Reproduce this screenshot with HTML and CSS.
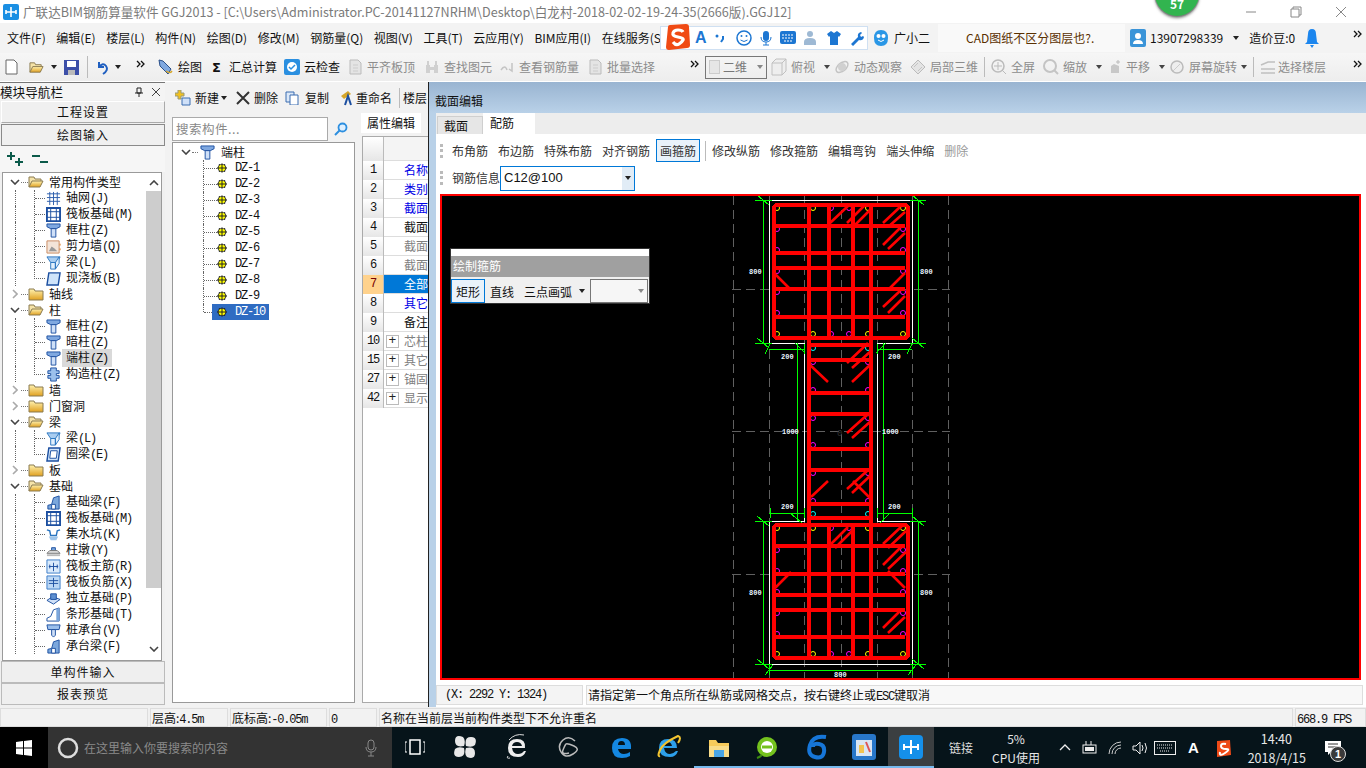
FILE: index.html
```html
<!DOCTYPE html>
<html lang="zh-CN">
<head>
<meta charset="utf-8">
<title>广联达BIM钢筋算量软件</title>
<link rel="stylesheet" href="styles.css">
</head>
<body>
<svg class="defs" width="0" height="0">
  <defs>
    <linearGradient id="gy" x1="0" y1="0" x2="0" y2="1"><stop offset="0" stop-color="#fff2b0"/><stop offset="1" stop-color="#e0a020"/></linearGradient>
    <symbol id="fc" viewBox="0 0 16 16"><path d="M1 3h5l1 2h8v9H1z" fill="url(#gy)" stroke="#8a7a50"/></symbol>
    <symbol id="fo" viewBox="0 0 16 16"><path d="M1 13V3h5l1 2h6v2" fill="#f5e3a8" stroke="#8a7a50"/><path d="M1 13l3-6h11l-3 6z" fill="url(#gy)" stroke="#8a7a50"/></symbol>
    <symbol id="col" viewBox="0 0 16 16"><path d="M1 1h14v3l-4 2H5L1 4z" fill="#7fa8e0" stroke="#1c4fa0"/><path d="M5.500 6h5v9h-5z" fill="#cfe0f8" stroke="#1c4fa0"/></symbol>
    <symbol id="grid" viewBox="0 0 16 16"><path d="M1 3h14M1 7h14M1 11h14M4 1v14M8 1v14M12 1v14" stroke="#2a5cab" fill="none"/></symbol>
    <symbol id="raft" viewBox="0 0 16 16"><path d="M1 1h14v14H1z" fill="#fff" stroke="#1c4fa0" stroke-width="2"/><path d="M5 1v14M11 1v14M1 5h14M1 11h14" stroke="#1c4fa0"/></symbol>
    <symbol id="wall" viewBox="0 0 16 16"><path d="M1 2h13v13H1z" fill="#f3e4d8" stroke="#c98a60"/><path d="M3 13l3-5 3 2 3 3z" fill="#999"/><path d="M15 5v2M15 10v2" stroke="#e07b20"/></symbol>
    <symbol id="beam" viewBox="0 0 16 16"><path d="M1 2h14l-3 6H5z" fill="#a9cdf0" stroke="#2a75c0"/><path d="M5 8h5v7H5zM10 8l4-6v7l-4 6z" fill="#e2f0fc" stroke="#2a75c0"/></symbol>
    <symbol id="slab" viewBox="0 0 16 16"><path d="M3 2h12l-2 13H1z" fill="#cfe4fa" stroke="#1c4fa0" stroke-width="1.500"/></symbol>
    <symbol id="ring" viewBox="0 0 16 16"><path d="M3 1h12l-2 14H1z" fill="#cfe4fa" stroke="#1c4fa0" stroke-width="1.500"/><path d="M5 4h7l-1 8H4z" fill="#fff" stroke="#1c4fa0"/></symbol>
    <symbol id="gz" viewBox="0 0 16 16"><path d="M5 1h6v3h3v3h-3v2h3v3h-3v3H5v-3H2V9h3V7H2V4h3z" fill="#9cc0ec" stroke="#1c4fa0"/></symbol>
    <symbol id="fb" viewBox="0 0 16 16"><path d="M2 15v-4l4-1 2-7 6-2v14z" fill="#7ba7dc" stroke="#1c4fa0"/><path d="M6 10h4v5H6z" fill="#fff" stroke="#1c4fa0"/></symbol>
    <symbol id="pit" viewBox="0 0 16 16"><path d="M1 3l3 1 1 5h6l1-5 3-1" fill="none" stroke="#2a75c0" stroke-width="1.500"/><path d="M3 10l2 4h6l2-4z" fill="#9cc4ea"/></symbol>
    <symbol id="pier" viewBox="0 0 16 16"><path d="M6 5h4v3H6z" fill="#7ba7dc" stroke="#1c4fa0"/><path d="M1 11l3-3h8l3 3z" fill="#d9d9d9" stroke="#777"/><path d="M1 12h14v2H1z" fill="#bbb"/></symbol>
    <symbol id="rm" viewBox="0 0 16 16"><path d="M1 1h14v14H1z" fill="#d9eafb" stroke="#3a7bc8"/><path d="M8 4v9M3 8h10M4 6v4M12 6v4" stroke="#1c4fa0" fill="none"/></symbol>
    <symbol id="rn" viewBox="0 0 16 16"><path d="M1 1h14v14H1z" fill="#bcd8f5" stroke="#3a7bc8"/><path d="M8 3v10M3 6h10M3 9h10" stroke="#1c4fa0" fill="none"/></symbol>
    <symbol id="iso" viewBox="0 0 16 16"><path d="M1 10l6-4 8 3-7 5z" fill="#cfe0f8" stroke="#1c4fa0"/><path d="M5 3h6v6H5z" fill="#5d8fd0" stroke="#1c4fa0"/></symbol>
    <symbol id="strip" viewBox="0 0 16 16"><path d="M1 15v-3l4-2 3-7 6-2v14z" fill="#fff" stroke="#1c4fa0"/><path d="M11 2l3-1v14h-3z" fill="#7ba7dc"/></symbol>
    <symbol id="cap" viewBox="0 0 16 16"><path d="M1 2h14l-1 5H2z" fill="#9cc0ec" stroke="#1c4fa0"/><path d="M6 7h4v6l-2 2-2-2z" fill="#cfe0f8" stroke="#1c4fa0"/></symbol>
    <symbol id="dz" viewBox="0 0 10 10"><path d="M5 0l1 1.500 2-.5.500 2L10 5 8.500 7 8 9l-2-.5L5 10 4 8.500 2 9l-.5-2L0 5l1.500-2L2 1l2 .5z" fill="#222"/><circle cx="5" cy="5" r="3.300" fill="#ff0"/><path d="M1.500 5h7M5 1.500v7" stroke="#222"/></symbol>
    <symbol id="chd" viewBox="0 0 10 6"><path d="M1 1l4 4 4-4" fill="none" stroke="#444" stroke-width="1.600"/></symbol>
    <symbol id="chr" viewBox="0 0 6 10"><path d="M1 1l4 4-4 4" fill="none" stroke="#aaa" stroke-width="1.600"/></symbol>
    <symbol id="dim" viewBox="0 0 16 16"><path d="M3 1h8l3 3v11H3z" fill="#e4e4e4" stroke="#bbb"/><path d="M6 6h5M6 9h5M6 12h5" stroke="#ccc"/></symbol>
    <symbol id="more" viewBox="0 0 9 8"><path d="M1 1l3 3-3 3M5 1l3 3-3 3" fill="none" stroke="#111" stroke-width="1.300"/></symbol>
  </defs>
</svg>

<header class="titlebar">
  <svg class="appicon" width="16" height="16" viewBox="0 0 16 16"><rect width="16" height="16" rx="2" fill="#1a8fe3"/><path d="M8 3v10M3 8h10M3 6v4M13 6v4" stroke="#fff" stroke-width="1.600" fill="none"/></svg>
  <span class="apptitle">广联达BIM钢筋算量软件 GGJ2013 - [C:\Users\Administrator.PC-20141127NRHM\Desktop\白龙村-2018-02-02-19-24-35(2666版).GGJ12]</span>
  <div class="winbtns">
    <svg width="12" height="12" viewBox="0 0 12 12"><path d="M1 6h10" stroke="#888"/></svg>
    <svg width="12" height="12" viewBox="0 0 12 12"><path d="M3 3V1h8v8H9M1 3h8v8H1z" stroke="#888" fill="none"/></svg>
    <svg width="12" height="12" viewBox="0 0 12 12"><path d="M1 1l10 10M11 1L1 11" stroke="#888"/></svg>
  </div>
  <div class="badge57">57</div>
</header>

<nav class="menubar">
  <div class="menus">
    <span>文件(F)</span><span>编辑(E)</span><span>楼层(L)</span><span>构件(N)</span><span>绘图(D)</span><span>修改(M)</span><span>钢筋量(Q)</span><span>视图(V)</span><span>工具(T)</span><span>云应用(Y)</span><span>BIM应用(I)</span><span>在线服务(S)</span>
  </div>
  <div class="imebar">
    <svg class="imelogo" width="28" height="26" viewBox="0 0 28 26"><path d="M5 3q0-2 2-2l16-1q3 0 3 3l1 18q0 3-3 3L6 26q-3 0-3-3z" fill="#f04a14"/><path d="M20 8q-1-2-5-2t-5 3 5 4 5 3-4 4-6-2" fill="none" stroke="#fff" stroke-width="3.200"/></svg>
    <span class="imeA">A</span>
    <svg class="ime-comma" width="12" height="16" viewBox="0 0 12 16"><circle cx="3" cy="6" r="1.500" fill="#1c76d2"/><path d="M9 6v3l-2 3" stroke="#1c76d2" stroke-width="2" fill="none"/></svg>
    <svg width="16" height="16" viewBox="0 0 16 16"><circle cx="8" cy="8" r="7" fill="none" stroke="#1c76d2" stroke-width="1.500"/><circle cx="5.500" cy="6" r="1" fill="#1c76d2"/><circle cx="10.500" cy="6" r="1" fill="#1c76d2"/><path d="M4.500 10q3.500 3 7 0" stroke="#1c76d2" fill="none"/></svg>
    <svg width="14" height="16" viewBox="0 0 14 16"><rect x="4" y="1" width="6" height="10" rx="3" fill="#1c76d2"/><path d="M2 7q0 5 5 5t5-5M7 12v3M4 15h6" stroke="#1c76d2" fill="none"/></svg>
    <svg width="16" height="14" viewBox="0 0 16 14"><rect width="16" height="13" rx="2" fill="#1c76d2"/><path d="M2 4h12M2 7h12M4 10h8" stroke="#fff" stroke-dasharray="2 1"/></svg>
    <svg width="16" height="16" viewBox="0 0 16 16"><circle cx="7" cy="4" r="3" fill="#9eb9d4"/><path d="M1 15v-3q0-4 6-4t6 4v3z" fill="#9eb9d4"/></svg>
    <svg width="16" height="16" viewBox="0 0 16 16"><path d="M5 1l3 2 3-2 4 3-2 3-1-1v9H4V6L3 7 1 4z" fill="#1c76d2"/></svg>
    <svg width="16" height="16" viewBox="0 0 16 16"><path d="M2 14l7-7q-1-4 3-5l1 1-2 2 1 2 2-1 1 1q-1 4-5 3l-6 6z" fill="#1c76d2"/></svg>
  </div>
  <svg class="mascot" width="16" height="18" viewBox="0 0 16 18"><path d="M8 1q7 0 7 8t-7 8-7-8 7-8z" fill="#2a97e6"/><circle cx="5.500" cy="7" r="2" fill="#fff"/><circle cx="10.500" cy="7" r="2" fill="#fff"/><path d="M5 11q3 3 6 0" stroke="#fff" fill="none"/></svg>
  <span class="xiaoer">广小二</span>
  <div class="newstab">CAD图纸不区分图层也?.</div>
  <div class="userbox">
    <svg width="16" height="18" viewBox="0 0 16 18"><rect width="16" height="18" rx="2" fill="#3a94d8"/><circle cx="8" cy="7" r="3" fill="#fff"/><path d="M3 15q0-4 5-4t5 4z" fill="#fff"/></svg>
    <span>13907298339</span><i class="caret"></i><span class="bean">造价豆:0</span>
    <svg class="bell" width="14" height="20" viewBox="0 0 14 20"><path d="M7 1q4 0 4 5l1 8 2 2H0l2-2 1-8q0-5 4-5z" fill="#1c86ee"/><path d="M5 17h4l-2 3z" fill="#1c86ee"/></svg>
  </div>
  <svg class="more-end" width="9" height="8"><use href="#more"/></svg>
</nav>

<div class="toolbar">
  <div class="tb-left">
    <svg width="13" height="16" viewBox="0 0 13 16"><path d="M1 1h8l3 3v11H1z" fill="#fff" stroke="#666"/></svg>
    <svg class="ti-open" width="17" height="15" viewBox="0 0 16 16"><use href="#fo"/></svg><i class="caret"></i>
    <svg class="ti-save" width="15" height="15" viewBox="0 0 15 15"><path d="M0 0h15v15H0z" fill="#3c4fa8"/><path d="M3 1h9v6H3z" fill="#fff"/><path d="M4 10h7v5H4z" fill="#bbb"/></svg>
    <i class="vsep"></i>
    <svg width="13" height="15" viewBox="0 0 13 15"><path d="M3 2v5h5" fill="none" stroke="#1f5fc0" stroke-width="2"/><path d="M3 7q4-5 7-1t-3 8" fill="none" stroke="#1f5fc0" stroke-width="2"/></svg><i class="caret"></i>
  </div>
  <svg class="more-a" width="9" height="8"><use href="#more"/></svg>
  <div class="tb-main">
    <div class="tool t-draw"><svg width="16" height="16" viewBox="0 0 16 16"><path d="M2 1l4 1 8 8-3 5-8-8z" fill="#7fa8e0" stroke="#2a4f88"/><path d="M9 12q4 3 6 0" stroke="#d6a62a" stroke-width="1.500" fill="none"/></svg>绘图</div>
    <div class="tool t-sum"><b class="sigma">Σ</b>汇总计算</div>
    <div class="tool t-cloud"><svg width="16" height="16" viewBox="0 0 16 16"><rect width="16" height="16" rx="2" fill="#2a8fe0"/><circle cx="8" cy="8" r="5" fill="#fff"/><path d="M5 8l2 2 4-4" stroke="#2a8fe0" stroke-width="1.500" fill="none"/></svg>云检查</div>
    <div class="tool off t-flat"><svg width="16" height="16"><use href="#dim"/></svg>平齐板顶</div>
    <div class="tool off t-find"><svg width="16" height="16" viewBox="0 0 16 16"><path d="M2 6h4v8H2zM10 6h4v8h-4zM6 8h4v3H6zM3 2h2v4H3zM11 2h2v4h-2z" fill="#d0d0d0"/></svg>查找图元</div>
    <div class="tool off t-view"><svg width="16" height="16" viewBox="0 0 16 16"><path d="M2 11q4-6 6 0M13 4v8l-3-2" stroke="#c4c4c4" stroke-width="1.500" fill="none"/></svg>查看钢筋量</div>
    <div class="tool off t-batch"><svg width="16" height="16"><use href="#dim"/></svg>批量选择</div>
  </div>
  <svg class="more-b" width="9" height="8"><use href="#more"/></svg>
  <div class="dimbox"><i class="dimsq"></i><span>二维</span><i class="caret gray"></i></div>
  <div class="tb-view">
    <div class="tool off t-top"><svg width="16" height="18" viewBox="0 0 16 18"><path d="M1 5l4-4h10v12l-4 4H1zM1 5h10v12M11 5l4-4" fill="#eee" stroke="#c0c0c0"/></svg>俯视<i class="caret"></i></div>
    <div class="tool off t-orbit"><svg width="16" height="16" viewBox="0 0 16 16"><ellipse cx="8" cy="8" rx="7" ry="4" transform="rotate(-40 8 8)" fill="none" stroke="#c4c4c4" stroke-width="1.500"/><circle cx="8" cy="8" r="4" fill="#d0d0d0"/></svg>动态观察</div>
    <div class="tool off t-local"><svg width="16" height="16" viewBox="0 0 16 16"><path d="M8 1l7 7-7 7-7-7z" fill="#e4e4e4" stroke="#bbb"/><path d="M4 8l4-4M8 12l4-4" stroke="#c4c4c4"/></svg>局部三维</div>
    <i class="vsep sm"></i>
    <div class="tool off t-full"><svg width="16" height="16" viewBox="0 0 16 16"><circle cx="7" cy="7" r="6" fill="none" stroke="#bbb" stroke-width="1.500"/><path d="M7 3v8M3 7h8M11 11l4 4" stroke="#bbb"/></svg>全屏</div>
    <div class="tool off t-zoom"><svg width="16" height="16" viewBox="0 0 16 16"><circle cx="7" cy="7" r="6" fill="none" stroke="#c4c4c4" stroke-width="2"/><path d="M11 11l4 4" stroke="#c4c4c4" stroke-width="2"/></svg>缩放<i class="caret"></i></div>
    <div class="tool off t-pan"><svg width="14" height="16" viewBox="0 0 14 16"><path d="M3 14V7l3-2 5 2v7z" fill="#c8c8c8"/><path d="M10 1v4M8 3h4" stroke="#bbb"/></svg>平移<i class="caret"></i></div>
    <div class="tool off t-rot"><svg width="16" height="16" viewBox="0 0 16 16"><circle cx="8" cy="8" r="6" fill="#eee" stroke="#bbb" stroke-width="1.500"/><path d="M4 12l7-7" stroke="#ccc"/></svg>屏幕旋转<i class="caret"></i></div>
    <i class="vsep sm"></i>
    <div class="tool off t-floor"><svg width="16" height="15" viewBox="0 0 16 15"><path d="M1 5l7-3h7M1 9h14M1 13h14" stroke="#c0c0c0" stroke-width="1.500" fill="none"/></svg>选择楼层</div>
  </div>
  <svg class="more-end" width="9" height="8"><use href="#more"/></svg>
</div>

<main class="workspace">
  <aside class="nav">
    <div class="navhead"><span>模块导航栏</span>
      <svg width="8" height="10" viewBox="0 0 8 10"><path d="M2 1h4v5H2zM0 6h8M4 6v4" fill="none" stroke="#222"/></svg>
      <svg width="8" height="8" viewBox="0 0 8 8"><path d="M0 0l8 8M8 0L0 8" stroke="#444"/></svg>
    </div>
    <button class="navbtn">工程设置</button>
    <button class="navbtn dark">绘图输入</button>
    <div class="expandbar">
      <svg width="18" height="16" viewBox="0 0 18 16"><path d="M1 5h8M5 1v8M9 11h8M13 7v8" stroke="#0b5a4a" stroke-width="2"/></svg>
      <svg width="18" height="16" viewBox="0 0 18 16"><path d="M1 5h8M9 11h8" stroke="#0b5a4a" stroke-width="2"/></svg>
    </div>
    <div class="treebox">
      <div class="tree">
        <div class="row r0"><svg class="chev" width="10" height="6"><use href="#chd"/></svg><i class="dots"></i><svg class="ic" width="16" height="16"><use href="#fo"/></svg><span class="lb">常用构件类型</span></div>
        <div class="row r1"><i class="ind"></i><i class="con"></i><svg class="ic" width="15" height="15"><use href="#grid"/></svg><span class="lb">轴网<em>(J)</em></span></div>
        <div class="row r1"><i class="ind"></i><i class="con"></i><svg class="ic" width="15" height="15"><use href="#raft"/></svg><span class="lb">筏板基础<em>(M)</em></span></div>
        <div class="row r1"><i class="ind"></i><i class="con"></i><svg class="ic" width="15" height="15"><use href="#col"/></svg><span class="lb">框柱<em>(Z)</em></span></div>
        <div class="row r1"><i class="ind"></i><i class="con"></i><svg class="ic" width="15" height="15"><use href="#wall"/></svg><span class="lb">剪力墙<em>(Q)</em></span></div>
        <div class="row r1"><i class="ind"></i><i class="con"></i><svg class="ic" width="15" height="15"><use href="#beam"/></svg><span class="lb">梁<em>(L)</em></span></div>
        <div class="row r1 end"><i class="ind none"></i><i class="con"></i><svg class="ic" width="15" height="15"><use href="#slab"/></svg><span class="lb">现浇板<em>(B)</em></span></div>
        <div class="row r0"><svg class="chev" width="10" height="10" viewBox="-2 0 10 10"><use href="#chr" width="6" height="10"/></svg><i class="dots"></i><svg class="ic" width="16" height="16"><use href="#fc"/></svg><span class="lb">轴线</span></div>
        <div class="row r0"><svg class="chev" width="10" height="6"><use href="#chd"/></svg><i class="dots"></i><svg class="ic" width="16" height="16"><use href="#fo"/></svg><span class="lb">柱</span></div>
        <div class="row r1"><i class="ind"></i><i class="con"></i><svg class="ic" width="15" height="15"><use href="#col"/></svg><span class="lb">框柱<em>(Z)</em></span></div>
        <div class="row r1"><i class="ind"></i><i class="con"></i><svg class="ic" width="15" height="15"><use href="#col"/></svg><span class="lb">暗柱<em>(Z)</em></span></div>
        <div class="row r1"><i class="ind"></i><i class="con"></i><svg class="ic" width="15" height="15"><use href="#col"/></svg><span class="lb hit">端柱<em>(Z)</em></span></div>
        <div class="row r1 end"><i class="ind none"></i><i class="con"></i><svg class="ic" width="15" height="15"><use href="#gz"/></svg><span class="lb">构造柱<em>(Z)</em></span></div>
        <div class="row r0"><svg class="chev" width="10" height="10" viewBox="-2 0 10 10"><use href="#chr" width="6" height="10"/></svg><i class="dots"></i><svg class="ic" width="16" height="16"><use href="#fc"/></svg><span class="lb">墙</span></div>
        <div class="row r0"><svg class="chev" width="10" height="10" viewBox="-2 0 10 10"><use href="#chr" width="6" height="10"/></svg><i class="dots"></i><svg class="ic" width="16" height="16"><use href="#fc"/></svg><span class="lb">门窗洞</span></div>
        <div class="row r0"><svg class="chev" width="10" height="6"><use href="#chd"/></svg><i class="dots"></i><svg class="ic" width="16" height="16"><use href="#fo"/></svg><span class="lb">梁</span></div>
        <div class="row r1"><i class="ind"></i><i class="con"></i><svg class="ic" width="15" height="15"><use href="#beam"/></svg><span class="lb">梁<em>(L)</em></span></div>
        <div class="row r1 end"><i class="ind none"></i><i class="con"></i><svg class="ic" width="15" height="15"><use href="#ring"/></svg><span class="lb">圈梁<em>(E)</em></span></div>
        <div class="row r0"><svg class="chev" width="10" height="10" viewBox="-2 0 10 10"><use href="#chr" width="6" height="10"/></svg><i class="dots"></i><svg class="ic" width="16" height="16"><use href="#fc"/></svg><span class="lb">板</span></div>
        <div class="row r0"><svg class="chev" width="10" height="6"><use href="#chd"/></svg><i class="dots"></i><svg class="ic" width="16" height="16"><use href="#fo"/></svg><span class="lb">基础</span></div>
        <div class="row r1"><i class="ind"></i><i class="con"></i><svg class="ic" width="15" height="15"><use href="#fb"/></svg><span class="lb">基础梁<em>(F)</em></span></div>
        <div class="row r1"><i class="ind"></i><i class="con"></i><svg class="ic" width="15" height="15"><use href="#raft"/></svg><span class="lb">筏板基础<em>(M)</em></span></div>
        <div class="row r1"><i class="ind"></i><i class="con"></i><svg class="ic" width="15" height="15"><use href="#pit"/></svg><span class="lb">集水坑<em>(K)</em></span></div>
        <div class="row r1"><i class="ind"></i><i class="con"></i><svg class="ic" width="15" height="15"><use href="#pier"/></svg><span class="lb">柱墩<em>(Y)</em></span></div>
        <div class="row r1"><i class="ind"></i><i class="con"></i><svg class="ic" width="15" height="15"><use href="#rm"/></svg><span class="lb">筏板主筋<em>(R)</em></span></div>
        <div class="row r1"><i class="ind"></i><i class="con"></i><svg class="ic" width="15" height="15"><use href="#rn"/></svg><span class="lb">筏板负筋<em>(X)</em></span></div>
        <div class="row r1"><i class="ind"></i><i class="con"></i><svg class="ic" width="15" height="15"><use href="#iso"/></svg><span class="lb">独立基础<em>(P)</em></span></div>
        <div class="row r1"><i class="ind"></i><i class="con"></i><svg class="ic" width="15" height="15"><use href="#strip"/></svg><span class="lb">条形基础<em>(T)</em></span></div>
        <div class="row r1"><i class="ind"></i><i class="con"></i><svg class="ic" width="15" height="15"><use href="#cap"/></svg><span class="lb">桩承台<em>(V)</em></span></div>
        <div class="row r1"><i class="ind"></i><i class="con"></i><svg class="ic" width="15" height="15"><use href="#fb"/></svg><span class="lb">承台梁<em>(F)</em></span></div>
      </div>
      <div class="scroll">
        <svg class="sc-up" width="10" height="6"><use href="#chd"/></svg>
        <div class="thumb"></div>
        <svg class="sc-dn" width="10" height="6"><use href="#chd"/></svg>
      </div>
    </div>
    <button class="navbtn flat">单构件输入</button>
    <button class="navbtn flat">报表预览</button>
  </aside>

  <div class="mid">
    <div class="comp-tools">
      <div class="ct c-new"><svg width="16" height="16" viewBox="0 0 16 16"><path d="M3 0h3v3h3v3H6v3H3V6H0V3h3z" fill="#f0c020" stroke="#997"/><path d="M7 8h8v7H7z" fill="#cfe0f8" stroke="#3a6cb0"/></svg>新建<i class="caret"></i></div>
      <div class="ct c-del"><svg width="14" height="14" viewBox="0 0 14 14"><path d="M1 1l12 12M13 1L1 13" stroke="#333" stroke-width="2"/></svg>删除</div>
      <div class="ct c-copy"><svg width="14" height="14" viewBox="0 0 14 14"><path d="M1 1h8v10H1z" fill="#dbe8f8" stroke="#3a6cb0"/><path d="M5 4h8v10H5z" fill="#fff" stroke="#3a6cb0"/></svg>复制</div>
      <div class="ct c-ren"><svg width="16" height="16" viewBox="0 0 16 16"><path d="M5 6l7-5 3 3-7 5z" fill="#d6a62a"/><path d="M9 15l3-9 3 9" fill="none" stroke="#1c4fa0" stroke-width="2"/></svg>重命名</div>
      <i class="vsep sm"></i>
      <div class="ct cut">楼层</div>
    </div>
    <div class="midrow">
      <section class="comp">
        <div class="searchline">
          <div class="searchbox">搜索构件...</div>
          <svg width="14" height="14" viewBox="0 0 14 14"><circle cx="8.500" cy="5.500" r="4" fill="#dff0ff" stroke="#2d8fe0" stroke-width="1.800"/><path d="M5.500 8.500L1 13" stroke="#2d8fe0" stroke-width="2"/></svg>
        </div>
        <div class="comptree">
          <div class="crow root"><svg width="10" height="6"><use href="#chd"/></svg><i class="dots"></i><svg class="cic" width="15" height="15"><use href="#col"/></svg><span>端柱</span></div>
          <div class="crow"><i class="ccon"></i><svg width="10" height="10"><use href="#dz"/></svg><em>DZ-1</em></div>
          <div class="crow"><i class="ccon"></i><svg width="10" height="10"><use href="#dz"/></svg><em>DZ-2</em></div>
          <div class="crow"><i class="ccon"></i><svg width="10" height="10"><use href="#dz"/></svg><em>DZ-3</em></div>
          <div class="crow"><i class="ccon"></i><svg width="10" height="10"><use href="#dz"/></svg><em>DZ-4</em></div>
          <div class="crow"><i class="ccon"></i><svg width="10" height="10"><use href="#dz"/></svg><em>DZ-5</em></div>
          <div class="crow"><i class="ccon"></i><svg width="10" height="10"><use href="#dz"/></svg><em>DZ-6</em></div>
          <div class="crow"><i class="ccon"></i><svg width="10" height="10"><use href="#dz"/></svg><em>DZ-7</em></div>
          <div class="crow"><i class="ccon"></i><svg width="10" height="10"><use href="#dz"/></svg><em>DZ-8</em></div>
          <div class="crow"><i class="ccon"></i><svg width="10" height="10"><use href="#dz"/></svg><em>DZ-9</em></div>
          <div class="crow sel"><i class="ccon last"></i><div class="selbg"><svg width="10" height="10"><use href="#dz"/></svg><em>DZ-10</em></div></div>
        </div>
      </section>

      <section class="props">
        <div class="ptabs"><span class="ptab">属性编辑</span></div>
        <div class="ptable">
          <div class="pr head"><b></b></div>
          <div class="pr"><b>1</b><span class="blue">名称</span></div>
          <div class="pr"><b>2</b><span class="blue">类别</span></div>
          <div class="pr"><b>3</b><span class="blue">截面</span></div>
          <div class="pr"><b>4</b><span>截面</span></div>
          <div class="pr"><b>5</b><span class="gray">截面</span></div>
          <div class="pr"><b>6</b><span class="gray">截面</span></div>
          <div class="pr on"><b>7</b><span>全部</span></div>
          <div class="pr"><b>8</b><span class="blue">其它</span></div>
          <div class="pr"><b>9</b><span>备注</span></div>
          <div class="pr gp"><b>10</b><i class="plus">+</i><span class="gray">芯柱</span></div>
          <div class="pr gp"><b>15</b><i class="plus">+</i><span class="gray">其它</span></div>
          <div class="pr gp"><b>27</b><i class="plus">+</i><span class="gray">锚固</span></div>
          <div class="pr gp"><b>42</b><i class="plus">+</i><span class="gray">显示</span></div>
        </div>
      </section>
    </div>
  </div>

  <section class="editor">
    <div class="edhead">截面编辑</div>
    <div class="edbody">
      <div class="tabs"><span class="tab">截面</span><span class="tab active">配筋</span></div>
      <div class="edtools">
        <i class="grip"></i>
        <span class="eb">布角筋</span><span class="eb">布边筋</span><span class="eb">特殊布筋</span><span class="eb">对齐钢筋</span><span class="eb pressed">画箍筋</span>
        <i class="vsep sm"></i>
        <span class="eb">修改纵筋</span><span class="eb">修改箍筋</span><span class="eb">编辑弯钩</span><span class="eb">端头伸缩</span><span class="eb dis">删除</span>
      </div>
      <div class="edinfo">
        <i class="grip"></i><span class="infol">钢筋信息</span>
        <div class="combo"><span>C12@100</span><i class="drop"><i class="caret"></i></i></div>
      </div>
      <div class="canvas">
        <svg class="cad" width="917" height="482" viewBox="442 196 917 482">
          <g class="dash">
            <path d="M733 196V678M769 196V678M804 196V678M841 196V678M877 196V678M912 196V678M948 196V678"/>
            <path d="M732 289H950M732 431H950M732 574H950"/>
          </g>
          <path class="wht" d="M804 343H769V200H912V343H877V521H912V664H769V521H804Z"/>
          <g class="grn">
            <path d="M763 200V343M918 200V343M755 200H772M910 200H926M755 343H772M910 343H926M757 195l12 10M912 195l12 10M757 338l12 10M912 338l12 10"/>
            <path d="M769 349H804M877 349H912M797 343V521M883 343V521M770 344l-5 10M804 344v10M877 344v10M912 344l-5 10M795 343l10 10M876 353l10-10"/>
            <path d="M769 513H804M877 513H912M770 508v10M804 508v10M877 508v10M912 508v10M790 513l12 10M880 523l10-10"/>
            <path d="M763 521V664M918 521V664M755 521H772M910 521H926M755 664H772M910 664H926M757 516l12 10M912 516l12 10M757 659l12 10M912 659l12 10"/>
            <path d="M769 670H912M769 665v10M912 665v10M765 675l8-10M908 675l8-10"/>
          </g>
          <g class="cadtxt">
            <text x="749" y="274">800</text><text x="920" y="274">800</text>
            <text x="781" y="359">200</text><text x="888" y="359">200</text>
            <text x="782" y="434">1000</text><text x="882" y="434">1000</text>
            <text x="781" y="509">200</text><text x="888" y="509">200</text>
            <text x="749" y="595">800</text><text x="920" y="595">800</text>
            <text x="834" y="677">800</text>
          </g>
          <g class="rb-y">
            <circle cx="777" cy="208" r="2.500"/><circle cx="813" cy="208" r="2.500"/><circle cx="868" cy="208" r="2.500"/><circle cx="903" cy="208" r="2.500"/>
            <circle cx="777" cy="334" r="2.500"/><circle cx="813" cy="334" r="2.500"/><circle cx="868" cy="334" r="2.500"/><circle cx="903" cy="334" r="2.500"/>
            <circle cx="777" cy="528" r="2.500"/><circle cx="813" cy="528" r="2.500"/><circle cx="868" cy="528" r="2.500"/><circle cx="903" cy="528" r="2.500"/>
            <circle cx="777" cy="654" r="2.500"/><circle cx="813" cy="654" r="2.500"/><circle cx="868" cy="654" r="2.500"/><circle cx="903" cy="654" r="2.500"/>
          </g>
          <g class="rb-m">
            <circle cx="831" cy="208" r="2.500"/><circle cx="849" cy="208" r="2.500"/><circle cx="831" cy="334" r="2.500"/><circle cx="849" cy="334" r="2.500"/>
            <circle cx="777" cy="229" r="2.500"/><circle cx="777" cy="250" r="2.500"/><circle cx="777" cy="271" r="2.500"/><circle cx="777" cy="292" r="2.500"/><circle cx="777" cy="313" r="2.500"/>
            <circle cx="903" cy="229" r="2.500"/><circle cx="903" cy="250" r="2.500"/><circle cx="903" cy="271" r="2.500"/><circle cx="903" cy="292" r="2.500"/><circle cx="903" cy="313" r="2.500"/>
            <circle cx="813" cy="362" r="2.500"/><circle cx="813" cy="390" r="2.500"/><circle cx="813" cy="418" r="2.500"/><circle cx="813" cy="445" r="2.500"/><circle cx="813" cy="473" r="2.500"/><circle cx="813" cy="501" r="2.500"/>
            <circle cx="868" cy="362" r="2.500"/><circle cx="868" cy="390" r="2.500"/><circle cx="868" cy="418" r="2.500"/><circle cx="868" cy="445" r="2.500"/><circle cx="868" cy="473" r="2.500"/><circle cx="868" cy="501" r="2.500"/>
            <circle cx="831" cy="528" r="2.500"/><circle cx="849" cy="528" r="2.500"/><circle cx="831" cy="654" r="2.500"/><circle cx="849" cy="654" r="2.500"/>
            <circle cx="777" cy="550" r="2.500"/><circle cx="777" cy="571" r="2.500"/><circle cx="777" cy="592" r="2.500"/><circle cx="777" cy="613" r="2.500"/><circle cx="777" cy="634" r="2.500"/>
            <circle cx="903" cy="550" r="2.500"/><circle cx="903" cy="571" r="2.500"/><circle cx="903" cy="592" r="2.500"/><circle cx="903" cy="613" r="2.500"/><circle cx="903" cy="634" r="2.500"/>
          </g>
          <g class="rb-c">
            <circle cx="813" cy="348" r="2.500"/><circle cx="868" cy="348" r="2.500"/><circle cx="813" cy="514" r="2.500"/><circle cx="868" cy="514" r="2.500"/>
          </g>
          <g class="red">
            <rect x="774" y="205" width="134" height="133" rx="3"/>
            <rect x="774" y="525" width="134" height="133" rx="3"/>
            <path d="M776 226H905M776 253H905M776 268H905M776 289H905M776 317H905"/>
            <path d="M829 205V338M853 205V338M809 205V659M871 205V659"/>
            <path d="M809 345H871M809 360H871M809 393H871M809 414H871M809 449H871M809 470H871M809 504H871M809 518H871"/>
            <path d="M776 546H905M776 574H905M776 595H905M776 610H905M776 637H905"/>
            <path d="M829 525V658M853 525V658"/>
          </g>
          <g class="diag">
            <path d="M830 223L848 206M847 223L864 206M855 225L870 210M883 223L900 207M888 227L905 212M883 245L900 228M888 249L905 233M774 273L791 290M888 290L905 273M883 307L900 291M888 313L905 296"/>
            <path d="M847 363L868 343M852 368L871 351M810 365L828 382M852 382L870 365M847 433L867 415M852 438L871 421M811 497L828 481M847 489L867 471M852 493L871 475M853 481L870 498"/>
            <path d="M830 545L848 527M835 548L853 530M883 544L903 525M888 548L906 531M883 565L903 545M888 569L906 552M775 588L791 572M888 571L905 588M883 628L900 611M888 633L905 617"/>
          </g>
          <text class="cadzero" x="837" y="436">0</text>
        </svg>
        <div class="floatpanel">
          <div class="fp-white"></div>
          <div class="fp-title">绘制箍筋</div>
          <div class="fp-tools">
            <span class="fb pressed">矩形</span><span class="fb">直线</span><span class="fb fb-arc">三点画弧</span><i class="caret"></i>
            <div class="fp-select"><i class="caret gray"></i></div>
          </div>
        </div>
      </div>
      <div class="cmdline">
        <span class="coord">(X: 2292 Y: 1324)</span>
        <span class="cmdmsg">请指定第一个角点所在纵筋或网格交点，按右键终止或<em>ESC</em>键取消</span>
      </div>
    </div>
  </section>
</main>

<footer class="statusbar">
  <span class="st s1"></span>
  <span class="st s2">层高:<em>4.5m</em></span>
  <span class="st s3">底标高:<em>-0.05m</em></span>
  <span class="st s4"><em>0</em></span>
  <span class="st s5">名称在当前层当前构件类型下不允许重名</span>
  <span class="st s6"><em>668.9 FPS</em></span>
</footer>

<div class="taskbar">
  <div class="start"><svg width="16" height="16" viewBox="0 0 16 16"><path d="M0 2l7-1v6.500H0zM8 1l8-1v7.500H8zM0 8.500h7V15l-7-1zM8 8.500h8V16l-8-1z" fill="#fff"/></svg></div>
  <div class="tsearch">
    <svg width="22" height="22" viewBox="0 0 22 22"><circle cx="11" cy="11" r="9" fill="none" stroke="#ddd" stroke-width="2.500"/></svg>
    <span>在这里输入你要搜索的内容</span>
    <svg class="mic" width="12" height="18" viewBox="0 0 12 18"><rect x="3" y="1" width="6" height="10" rx="3" fill="none" stroke="#888"/><path d="M1 8q0 5 5 5t5-5M6 13v4M3 17h6" stroke="#888" fill="none"/></svg>
  </div>
  <div class="tapps">
    <div class="app"><svg width="20" height="16" viewBox="0 0 20 16"><path d="M5 1h10v14H5z" fill="none" stroke="#fff" stroke-width="1.500"/><path d="M2 3H0v10h2M18 3h2v10h-2" fill="none" stroke="#fff"/></svg></div>
    <div class="app"><svg width="24" height="24" viewBox="0 0 24 24"><path d="M11 11Q2 13 2 6t8-4q3 3 1 9zM13 11Q11 2 18 2t4 8q-3 3-9 1zM13 13q9-2 9 5t-8 4q-3-3-1-9zM11 13q2 9-5 9t-4-8q3-3 9-1z" fill="#e8e8e8"/></svg></div>
    <div class="app"><svg width="24" height="26" viewBox="0 0 24 26"><path d="M3 14q0-9 9-9t8 9H7q1 6 6 6 4 0 6-3h2q-2 6-8 6-10 0-10-9zM7 12h10q-1-4-5-4t-5 4z" fill="#eee"/><path d="M4 6q6-7 15-5M3 22q-2 3 2 2" stroke="#ddd" fill="none"/></svg></div>
    <div class="app"><svg width="20" height="22" viewBox="0 0 20 22"><path d="M17 5Q11-1 5 4t-2 12 12 2 1-8-8-2-3 6 6 3" fill="none" stroke="#bbb" stroke-width="1.500"/></svg></div>
    <div class="app"><svg width="24" height="26" viewBox="0 0 24 26"><path d="M2 14q0-10 10-10t9 11H8q1 5 6 5 3 0 6-2v4q-3 2-8 2-10 0-10-10zM8 11h7q0-4-3.500-4T8 11z" fill="#1488e2"/></svg></div>
    <div class="app"><svg width="26" height="26" viewBox="0 0 26 26"><path d="M3 14q0-9 9-9t9 9H8q1 6 6 6 3 0 6-3h2q-2 6-8 6-11 0-11-9zM8 12h8q-1-4-4-4t-4 4z" fill="#2da0ea"/><path d="M4 22q-3 1 0-6T22 2q4 1 0 7" fill="none" stroke="#f3c530" stroke-width="2"/></svg></div>
    <div class="app"><svg width="22" height="22" viewBox="0 0 22 22"><path d="M1 4h7l2 3h11v14H1z" fill="#f6cb5b"/><path d="M1 10h20v11H1z" fill="#f9dd8a"/><path d="M6 14h10v7H6z" fill="#49a5e6"/></svg></div>
    <div class="app"><svg width="24" height="26" viewBox="0 0 24 26"><circle cx="12" cy="13" r="10" fill="#74c21e"/><circle cx="12" cy="13" r="6" fill="#fff"/><path d="M7 13h10" stroke="#74c21e" stroke-width="3"/><path d="M2 24q3-1 5-3" stroke="#3a8a10" stroke-width="2"/></svg></div>
    <div class="app"><svg width="24" height="26" viewBox="0 0 24 26"><path d="M21 3Q8 1 5 11t5 12 9-5-5-8-6 3" fill="none" stroke="#1676d8" stroke-width="4"/></svg></div>
    <div class="app"><svg width="24" height="26" viewBox="0 0 24 26"><rect width="24" height="26" y="0" rx="3" fill="#2877c9"/><path d="M4 6h16v16H4z" fill="#d9e6f4"/><path d="M7 11h5v8H7z" fill="#f2c350"/><path d="M14 8l4 10" stroke="#d55" stroke-width="2"/></svg></div>
    <div class="app active"><svg width="24" height="24" viewBox="0 0 24 24"><rect width="24" height="24" rx="4" fill="#1590ea"/><path d="M12 5v14M5 12h14M5 9v6M19 9v6" stroke="#fff" stroke-width="2" fill="none"/></svg></div>
  </div>
  <span class="tlink">链接</span>
  <div class="cpu"><span>5%</span><span>CPU使用</span></div>
  <div class="tray">
    <svg width="12" height="7" viewBox="0 0 12 7"><path d="M1 6l5-5 5 5" stroke="#eee" fill="none" stroke-width="1.300"/></svg>
    <svg width="16" height="13" viewBox="0 0 16 13"><rect x="1" y="4" width="13" height="8" fill="none" stroke="#eee"/><rect x="3" y="6" width="9" height="4" fill="#eee"/><path d="M4 0v4M9 0v4" stroke="#eee"/></svg>
    <svg width="16" height="14" viewBox="0 0 16 14"><path d="M1 13A12 12 0 0 1 13 1M4 13a9 9 0 0 1 9-9M7 13a6 6 0 0 1 6-6" fill="none" stroke="#ccc"/></svg>
    <svg width="16" height="14" viewBox="0 0 16 14"><path d="M1 5h3l4-4v12L4 9H1z" fill="none" stroke="#eee"/><path d="M10 4q2 3 0 6M13 2q3 5 0 10" fill="none" stroke="#eee"/></svg>
    <svg width="22" height="14" viewBox="0 0 22 14"><rect x=".5" y=".5" width="21" height="13" fill="none" stroke="#eee"/><path d="M3 4h16M3 7h16M6 10h10" stroke="#eee" stroke-dasharray="1 1"/></svg>
    <span class="trayA">A</span>
    <svg width="16" height="18" viewBox="0 0 16 18"><path d="M2 2l13-1 1 15-14 2z" fill="#ee4a17"/><path d="M11 5q-5-1-5 2t5 3-1 4-5-1" fill="none" stroke="#fff" stroke-width="2"/></svg>
  </div>
  <div class="clock"><span>14:40</span><span>2018/4/15</span></div>
  <div class="notify">
    <svg width="16" height="16" viewBox="0 0 16 16"><path d="M0 1h16v11H6l-3 3v-3H0z" fill="#fff"/><path d="M3 4h10M3 7h10" stroke="#333"/></svg>
    <span class="notnum">1</span>
  </div>
</div>
</body>
</html>
```
FILE: styles.css
```css
* { box-sizing: border-box; }
html, body { margin: 0; padding: 0; }
body {
  width: 1366px; height: 768px; overflow: hidden; display: flex; flex-direction: column;
  background: #f0f0f0; color: #111;
  font: 12px/16px "Noto Sans CJK SC", "Liberation Sans", sans-serif;
  position: relative;
}
.defs { position: absolute; }
svg { flex: none; display: block; }
em { font: normal 12px/16px "Liberation Mono", monospace; letter-spacing: -1.2px; }
i { font-style: normal; }

.titlebar { height: 23px; flex: none; background: #fff; display: flex; align-items: center; padding-left: 3px; position: relative; }
.apptitle { margin-left: 4px; color: #7a7a7a; font-size: 12.600px; white-space: nowrap; }
.winbtns { margin-left: auto; display: flex; gap: 33px; padding-left: 10px; width: 131px; flex: none; }
.badge57 { position: absolute; left: 1155px; top: -28px; width: 44px; height: 44px; border-radius: 50%; background: #32b44f; color: #fff; font-weight: bold; font-size: 12px; display: flex; align-items: flex-end; justify-content: center; padding-bottom: 4px; box-shadow: 0 2px 3px #777, 0 0 0 1px #bbb; }

.menubar { height: 30px; flex: none; background: #f3f3f3; display: flex; align-items: center; position: relative; }
.menus { width: 660px; display: flex; padding-left: 7px; white-space: nowrap; overflow: hidden; flex: none; font-size: 12px; }
.menus span { margin-right: 10.600px; }
.imebar { width: 208px; height: 24px; background: #fff; border: 1px solid #cfe0f2; display: flex; align-items: center; gap: 7px; padding-left: 34px; position: relative; flex: none; }
.imelogo { position: absolute; left: 2px; top: -3px; }
.imeA { color: #1c76d2; font: bold 16px "Liberation Sans", sans-serif; }
.ime-comma { margin-right: 3px; }
.mascot { margin-left: 5px; }
.xiaoer { margin-left: 5px; width: 40px; }
.newstab { width: 187px; height: 28px; padding-left: 28px; margin-left: 4px; background: #f9f9f9; color: #5a3000; line-height: 28px; white-space: nowrap; }
.userbox { display: flex; align-items: center; margin-left: 5px; gap: 4px; }
.userbox .caret { margin: 0 6px; }
.bell { margin-left: 6px; }
.menubar > .more-end, .toolbar > .more-end { position: absolute; right: 4px; top: 7px; }
.caret { display: inline-block; width: 0; height: 0; border: 3px solid transparent; border-top: 4px solid #222; border-bottom: 0; flex: none; }
.caret.gray { border-top-color: #888; }

.toolbar { height: 29px; flex: none; background: linear-gradient(#f6f6f6, #ededed); border-bottom: 1px solid #fff; display: flex; align-items: center; white-space: nowrap; position: relative; }
.tb-left { width: 130px; flex: none; display: flex; align-items: center; padding-left: 5px; }
.ti-open { margin-left: 10px; }
.tb-left .caret { margin-left: 6px; }
.ti-save { margin-left: 7px; }
.vsep { width: 1px; height: 22px; background: #bbb; margin: 0 8px; flex: none; }
.vsep.sm { height: 20px; margin: 0 6px; }
.more-a { margin: -6px 0 0 6px; }
.tb-main { display: flex; align-items: center; margin-left: 12px; width: 533px; flex: none; }
.tool { display: flex; align-items: center; gap: 4px; }
.tool.off { color: #8c8c8c; }
.tool.off .caret { border-top-color: #444; margin-left: 5px; }
.sigma { font: bold 13px "DejaVu Sans", sans-serif; width: 10px; margin-right: 3px; }
.t-draw { gap: 5px; }
.t-sum { margin-left: 10px; gap: 4px; }
.t-cloud { margin-left: 7px; }
.t-flat { margin-left: 7px; }
.t-find { margin-left: 9px; }
.t-view { margin-left: 7px; }
.t-batch { margin-left: 8px; }
.more-b { margin: -6px 0 0 0; }
.dimbox { width: 62px; height: 23px; border: 1px solid #777; margin-left: 6px; display: flex; align-items: center; padding: 0 3px; gap: 3px; flex: none; color: #777; }
.dimsq { width: 15px; height: 14px; background: #e6e6e6; border: 1px solid #ccc; }
.dimbox .caret { margin-left: 7px; }
.tb-view { display: flex; align-items: center; margin-left: 4px; }
.t-orbit { margin-left: 4px; }
.t-local { margin-left: 8px; }
.t-zoom { margin-left: 8px; }
.t-pan { margin-left: 6px; }
.t-rot { margin-left: 4px; }
.t-rot .caret, .tool.off.t-rot .caret { margin-left: 0; }
.t-floor { gap: 2px; }

.workspace { flex: 1; display: flex; min-height: 0; overflow: hidden; }

.nav { width: 165px; flex: none; display: flex; flex-direction: column; background: #f0f0f0; }
.navhead { height: 18px; flex: none; display: flex; align-items: center; padding-right: 5px; gap: 9px; border-top: 1px solid #777; font-size: 12.600px; background: #f4f4f4; }
.navhead span { margin-right: auto; }
.navbtn { flex: none; height: 22px; margin: 1px 0 0 1px; width: 164px; font: 12px/16px "Noto Sans CJK SC", sans-serif; color: #111; letter-spacing: 1px; background: #f0f0f0; border: 1px solid #aaa; border-top-color: #fff; border-left-color: #fff; padding: 0; }
.navbtn.dark { border: 1px solid #8a8a8a; }
.navbtn.flat { border: 1px solid #bbb; background: #efefef; margin-top: 0; }
.expandbar { height: 26px; flex: none; display: flex; gap: 7px; align-items: center; padding-left: 6px; background: #f6f6f6; }
.treebox { flex: 1; min-height: 0; margin: 0 3px 0 2px; border: 1px solid #9a9a9a; background: #fff; display: flex; overflow: hidden; }
.tree { flex: 1; overflow: hidden; padding-top: 1px; min-width: 0; }
.row { height: 16px; display: flex; align-items: center; white-space: nowrap; }
.r0 { padding-left: 7px; }
.chev { width: 10px; }
.dots { width: 7px; border-top: 1px dotted #777; margin: 0 0 0 1px; flex: none; }
.r0 .ic { margin-right: 4px; }
.ind { width: 19px; height: 16px; margin-left: 12px; border-left: 1px dotted #666; flex: none; }
.con { width: 11px; height: 16px; border-left: 1px dotted #666; flex: none; }
.con::before { content: ""; display: block; height: 8px; border-bottom: 1px dotted #666; }
.end .con { border-left-color: transparent; }
.end .con::before { border-left: 1px dotted #666; margin-left: -1px; }
.r1 .ic { margin-right: 4px; margin-left: 1px; }
.lb { padding: 0 1px; }
.hit { background: #d9d9d9; padding-right: 4px; margin-left: -3px; padding-left: 4px; }
.scroll { width: 15px; flex: none; background: #fff; display: flex; flex-direction: column; align-items: center; padding-top: 7px; }
.sc-up { transform: rotate(180deg); margin-bottom: 5px; }
.thumb { width: 15px; height: 397px; background: #cdcdcd; flex: none; }
.sc-dn { margin-top: 58px; }
.nav .navbtn.flat:last-child { margin-bottom: 2px; }

.mid { width: 263px; flex: none; display: flex; flex-direction: column; background: #f2f2f2; min-height: 0; }
.comp-tools { height: 31px; flex: none; display: flex; align-items: center; padding-left: 10px; white-space: nowrap; overflow: hidden; }
.ct { display: flex; align-items: center; gap: 4px; flex: none; }
.ct .caret { margin-left: -2px; }
.c-del { margin-left: 9px; }
.c-copy { margin-left: 7px; gap: 6px; }
.c-ren { margin-left: 7px; }
.comp-tools .vsep.sm { margin: 0 3px 0 7px; }
.midrow { flex: 1; min-height: 0; display: flex; }
.comp { width: 195px; flex: none; display: flex; flex-direction: column; padding-left: 7px; }
.searchline { height: 29px; flex: none; display: flex; align-items: center; gap: 6px; padding-top: 3px; }
.searchbox { width: 156px; height: 24px; border: 1px solid #aaa; background: #fff; color: #888; font-size: 12.500px; line-height: 21px; padding-left: 3px; letter-spacing: .5px; }
.comptree { flex: 1; margin: 0 6px 4px 0; border: 1px solid #999; background: #fff; padding-top: 1px; width: 183px; }
.crow { height: 16px; display: flex; align-items: center; padding-left: 30px; white-space: nowrap; }
.crow.root { padding-left: 8px; }
.crow.root .dots { width: 6px; }
.cic { margin: 0 6px 0 2px; }
.crow > svg { margin-right: 8px; }
.crow.root > svg { margin-right: 0; }
.crow.root .cic { margin-right: 6px; }
.ccon { width: 14px; height: 16px; border-left: 1px dotted #666; flex: none; }
.ccon::before { content: ""; display: block; height: 8px; border-bottom: 1px dotted #666; }
.ccon.last { height: 8px; margin-bottom: 8px; }
.crow.sel .ccon { width: 9px; }
.selbg { background: #2f6cc2; color: #fff; width: 57px; height: 16px; display: flex; align-items: center; padding-left: 5px; gap: 8px; }
.selbg em { color: #fff; }

.props { width: 68px; flex: none; overflow: hidden; display: flex; flex-direction: column; padding-left: 2px; }
.ptabs { height: 20px; flex: none; display: flex; align-items: flex-end; }
.ptab { width: 60px; height: 20px; background: #fff; text-align: center; line-height: 19px; margin-left: -1px; }
.ptable { flex: 1; margin-top: 3px; background: #fff; border: 1px solid #aaa; border-right: 0; margin-bottom: 4px; width: 80px; }
.pr { height: 19px; display: flex; align-items: center; border-bottom: 1px solid #ddd; white-space: nowrap; }
.pr.head { height: 24px; background: #f4f4f4; }
.pr b { width: 21px; height: 19px; background: linear-gradient(#fff, #e6e6e6); border-right: 1px solid #bbb; font: normal 12px/19px "Liberation Mono", monospace; letter-spacing: -1.2px; text-align: center; flex: none; }
.pr.head b { height: 24px; }
.pr span { margin-left: 20px; }
.pr .blue { color: #0000e6; }
.pr .gray { color: #808080; }
.pr.on b { background: #ffd28c; color: #700; }
.pr.on span { margin: 0; background: #0078d7; color: #fff; width: 60px; height: 18px; padding-left: 20px; line-height: 18px; }
.pr.gp span { margin-left: 5px; }
.plus { width: 13px; height: 13px; border: 1px solid #bbb; margin-left: 2px; font: 13px/10px "Liberation Mono", monospace; text-align: center; color: #222; flex: none; }

.editor { flex: 1; min-width: 0; border-left: 1px solid #222; background: #b9d1e8; display: flex; flex-direction: column; }
.edhead { height: 31px; flex: none; background: linear-gradient(#99b4d1, #b9d1e8); padding: 11px 0 0 6px; line-height: 16px; }
.edbody { flex: 1; min-height: 0; margin-left: 7px; background: #fff; display: flex; flex-direction: column; }
.tabs { height: 21px; flex: none; display: flex; align-items: flex-end; background: #ededed; padding-left: 1px; }
.tab { width: 46px; height: 18px; background: #e6e6e6; border: 1px solid #cfcfcf; border-bottom: 0; padding-left: 6px; line-height: 18px; }
.tab.active { width: 52px; height: 21px; background: #fff; border: 0; line-height: 20px; padding-left: 7px; }
.edtools { height: 29px; flex: none; display: flex; align-items: center; padding: 4px 0 0 4px; white-space: nowrap; background: #fff; }
.grip { width: 3px; height: 14px; margin-right: 5px; border-left: 3px dotted #bbb; flex: none; }
.eb { margin-right: 2px; height: 23px; line-height: 22px; border: 1px solid transparent; flex: none; padding: 0 3px; color: #333; }
.eb.pressed { border-color: #0078d7; background: #e9f2fa; }
.eb.dis { color: #999; }
.edtools .vsep.sm { margin: 0 2px 0 3px; }
.edinfo { height: 30px; flex: none; display: flex; align-items: center; padding-left: 4px; background: #fff; }
.edinfo .grip { margin-right: 9px; }
.infol { color: #333; white-space: nowrap; width: 48px; flex: none; }
.combo { width: 135px; height: 25px; border: 1px solid #0078d7; background: #fff; display: flex; align-items: stretch; padding-left: 3px; line-height: 21px; }
.combo span { flex: 1; font: 13px/22px "Liberation Sans", sans-serif; }
.drop { width: 12px; background: #e1ecf6; display: flex; align-items: center; justify-content: center; }
.canvas { width: 921px; height: 486px; flex: none; margin: 1px 0 0 4px; border: 2px solid #f00; background: #000; position: relative; }
.cad { background: #000; }
.dash { fill: none; stroke: #606060; stroke-width: 1; stroke-dasharray: 9 5; shape-rendering: crispEdges; }
.wht { fill: none; stroke: #fff; stroke-width: 1; shape-rendering: crispEdges; }
.grn { fill: none; stroke: #0f0; stroke-width: 1; shape-rendering: crispEdges; }
.cadtxt { fill: #e8f4ff; font: bold 7px "Liberation Mono", monospace; }
.cadzero { fill: #333; font: 9px "Liberation Mono", monospace; }
.rb-y { fill: none; stroke: #ff0; stroke-width: 1; }
.rb-m { fill: none; stroke: #f0f; stroke-width: 1; }
.rb-c { fill: none; stroke: #0ff; stroke-width: 1; }
.red { fill: none; stroke: #f00; stroke-width: 3.800; shape-rendering: crispEdges; }
.diag { fill: none; stroke: #f00; stroke-width: 2.600; }
.floatpanel { position: absolute; left: 8px; top: 52px; width: 200px; height: 56px; border: 1px solid #333; background: #f0f0f0; }
.fp-white { height: 7px; background: #fff; }
.fp-title { height: 21px; background: #a0a0a0; color: #fff; line-height: 20px; padding-left: 2px; }
.fp-tools { height: 26px; display: flex; align-items: center; margin-top: 1px; }
.fb { height: 24px; padding: 0 4px; line-height: 23px; border: 1px solid transparent; white-space: nowrap; flex: none; }
.fb.pressed { border-color: #0078d7; background: #e9f2fa; }
.fp-tools .caret { margin: 0 5px 0 2px; }
.fp-select { width: 58px; height: 24px; border: 1px solid #777; background: #f6f6f6; display: flex; align-items: center; justify-content: flex-end; padding-right: 3px; flex: none; }
.fp-select .caret { margin: 0; }
.cmdline { flex: 1; display: flex; padding-top: 5px; gap: 3px; }
.coord { width: 147px; height: 20px; border: 1px solid #ddd; background: #f4f4f4; padding-left: 8px; font: 12px/18px "Liberation Mono", monospace; letter-spacing: -1.2px; white-space: pre; }
.cmdmsg { width: 777px; height: 20px; border: 1px solid #ddd; background: #f8f8f8; padding-left: 1px; line-height: 18px; white-space: nowrap; }

.statusbar { height: 20px; flex: none; display: flex; gap: 2px; background: #f0f0f0; padding-top: 1px; white-space: nowrap; }
.st { border: 1px solid #ddd; height: 19px; line-height: 17px; padding-left: 1px; background: #f2f2f2; }
.s1 { width: 148px; }
.s2 { width: 78px; }
.s3 { width: 97px; }
.s4 { width: 48px; }
.s5 { width: 914px; }
.s6 { width: 71px; }

.taskbar { height: 41px; flex: none; background: #06141a; display: flex; align-items: center; color: #e8e8e8; position: relative; }
.start { width: 48px; height: 41px; background: #000; display: flex; align-items: center; justify-content: center; flex: none; }
.tsearch { width: 344px; height: 41px; background: #333; display: flex; align-items: center; padding-left: 9px; color: #8a8a8a; gap: 5px; flex: none; }
.mic { margin-left: auto; margin-right: 15px; }
.tapps { display: flex; margin-left: -2px; width: 543px; flex: none; }
.app { width: 50px; height: 41px; display: flex; align-items: center; justify-content: center; flex: none; border-bottom: 2px solid transparent; }
.app:nth-child(3) { margin-left: 2px; }
.app:nth-child(4) { margin-left: 1px; }
.app:nth-child(5) { margin-left: 4px; }
.app:nth-child(6) { margin-left: -3px; }
.app:nth-child(8) { margin-left: -2px; }
.app:nth-child(10) { margin-left: -3px; }
.app:nth-child(n+7) { border-bottom-color: #76b9ed; }
.app.active { background: #3b3f41; width: 46px; margin-left: -1px; }
.tlink { margin-left: 16px; width: 36px; color: #ddd; flex: none; }
.cpu { display: flex; flex-direction: column; align-items: center; width: 80px; margin-left: -9px; line-height: 19px; flex: none; }
.tray { display: flex; align-items: center; gap: 8px; margin-left: 3px; width: 176px; flex: none; }
.tray > :nth-child(2) { margin-left: 3px; }
.tray > :nth-child(3) { margin-left: 2px; }
.tray > :nth-child(5) { margin-left: -2px; }
.tray > :nth-child(6) { margin-left: 4px; }
.tray > :nth-child(7) { margin-left: 8px; }
.trayA { font: bold 15px "Liberation Sans", sans-serif; color: #fff; }
.clock { display: flex; flex-direction: column; align-items: flex-end; width: 62px; margin-left: 9px; line-height: 19px; flex: none; font-size: 12.500px; }
.clock span:first-child { padding-right: 14px; }
.notify { margin-left: 19px; position: relative; }
.notnum { position: absolute; left: 5px; top: 6px; width: 16px; height: 16px; border-radius: 50%; background: #3a3a3a; border: 1px solid #ddd; color: #fff; font: bold 11px/14px "Liberation Sans", sans-serif; text-align: center; }
```
